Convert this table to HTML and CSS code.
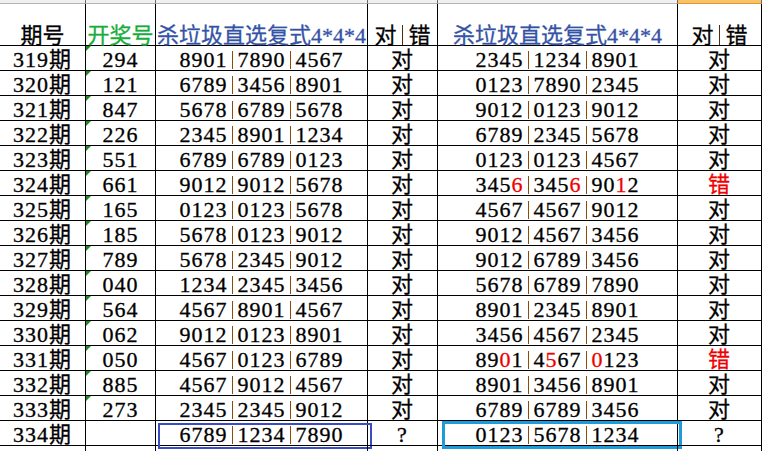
FILE: index.html
```html
<!DOCTYPE html>
<html lang="zh-CN">
<head>
<meta charset="utf-8">
<title>杀垃圾直选复式</title>
<link rel="stylesheet" href="styles.css">
</head>
<body>
<div class="sheet">
  <div class="strip"></div><div class="strip"></div><div class="strip"></div><div class="strip"></div><div class="strip"></div><div class="strip sel"></div>

  <div class="hd">期号</div>
  <div class="hd green">开奖号</div>
  <div class="hd blue">杀垃圾直选复式4*4*4</div>
  <div class="hd">对<i class="bar"></i>错</div>
  <div class="hd blue">杀垃圾直选复式4*4*4</div>
  <div class="hd">对<i class="bar"></i>错</div>

  <div class="c">319期</div><div class="c t">294</div><div class="c">8901<i class="bar"></i>7890<i class="bar"></i>4567</div><div class="c">对</div><div class="c">2345<i class="bar"></i>1234<i class="bar"></i>8901</div><div class="c">对</div>
  <div class="c">320期</div><div class="c t">121</div><div class="c">6789<i class="bar"></i>3456<i class="bar"></i>8901</div><div class="c">对</div><div class="c">0123<i class="bar"></i>7890<i class="bar"></i>2345</div><div class="c">对</div>
  <div class="c">321期</div><div class="c t">847</div><div class="c">5678<i class="bar"></i>6789<i class="bar"></i>5678</div><div class="c">对</div><div class="c">9012<i class="bar"></i>0123<i class="bar"></i>9012</div><div class="c">对</div>
  <div class="c">322期</div><div class="c t">226</div><div class="c">2345<i class="bar"></i>8901<i class="bar"></i>1234</div><div class="c">对</div><div class="c">6789<i class="bar"></i>2345<i class="bar"></i>5678</div><div class="c">对</div>
  <div class="c">323期</div><div class="c t">551</div><div class="c">6789<i class="bar"></i>6789<i class="bar"></i>0123</div><div class="c">对</div><div class="c">0123<i class="bar"></i>0123<i class="bar"></i>4567</div><div class="c">对</div>
  <div class="c">324期</div><div class="c t">661</div><div class="c">9012<i class="bar"></i>9012<i class="bar"></i>5678</div><div class="c">对</div><div class="c">345<span class="r">6</span><i class="bar"></i>345<span class="r">6</span><i class="bar"></i>90<span class="r">1</span>2</div><div class="c r">错</div>
  <div class="c">325期</div><div class="c t">165</div><div class="c">0123<i class="bar"></i>0123<i class="bar"></i>5678</div><div class="c">对</div><div class="c">4567<i class="bar"></i>4567<i class="bar"></i>9012</div><div class="c">对</div>
  <div class="c">326期</div><div class="c t">185</div><div class="c">5678<i class="bar"></i>0123<i class="bar"></i>9012</div><div class="c">对</div><div class="c">9012<i class="bar"></i>4567<i class="bar"></i>3456</div><div class="c">对</div>
  <div class="c">327期</div><div class="c t">789</div><div class="c">5678<i class="bar"></i>2345<i class="bar"></i>9012</div><div class="c">对</div><div class="c">9012<i class="bar"></i>6789<i class="bar"></i>3456</div><div class="c">对</div>
  <div class="c">328期</div><div class="c t">040</div><div class="c">1234<i class="bar"></i>2345<i class="bar"></i>3456</div><div class="c">对</div><div class="c">5678<i class="bar"></i>6789<i class="bar"></i>7890</div><div class="c">对</div>
  <div class="c">329期</div><div class="c t">564</div><div class="c">4567<i class="bar"></i>8901<i class="bar"></i>4567</div><div class="c">对</div><div class="c">8901<i class="bar"></i>2345<i class="bar"></i>8901</div><div class="c">对</div>
  <div class="c">330期</div><div class="c t">062</div><div class="c">9012<i class="bar"></i>0123<i class="bar"></i>8901</div><div class="c">对</div><div class="c">3456<i class="bar"></i>4567<i class="bar"></i>2345</div><div class="c">对</div>
  <div class="c">331期</div><div class="c t">050</div><div class="c">4567<i class="bar"></i>0123<i class="bar"></i>6789</div><div class="c">对</div><div class="c">89<span class="r">0</span>1<i class="bar"></i>4<span class="r">5</span>67<i class="bar"></i><span class="r">0</span>123</div><div class="c r">错</div>
  <div class="c">332期</div><div class="c t">885</div><div class="c">4567<i class="bar"></i>9012<i class="bar"></i>4567</div><div class="c">对</div><div class="c">8901<i class="bar"></i>3456<i class="bar"></i>8901</div><div class="c">对</div>
  <div class="c">333期</div><div class="c t">273</div><div class="c">2345<i class="bar"></i>2345<i class="bar"></i>9012</div><div class="c">对</div><div class="c">6789<i class="bar"></i>6789<i class="bar"></i>3456</div><div class="c">对</div>
  <div class="c">334期</div><div class="c"></div><div class="c box-a">6789<i class="bar"></i>1234<i class="bar"></i>7890</div><div class="c">?</div><div class="c box-b">0123<i class="bar"></i>5678<i class="bar"></i>1234</div><div class="c">?</div>

  <div class="c"></div><div class="c"></div><div class="c"></div><div class="c"></div><div class="c"></div><div class="c"></div>
</div>
</body>
</html>
```

FILE: styles.css
```css
html, body {
  margin: 0;
  padding: 0;
  background: #ffffff;
}

body {
  width: 765px;
  height: 451px;
  overflow: hidden;
  font-family: "Liberation Serif", "Noto Sans CJK SC", serif;
  font-size: 22px;
  color: #000;
}

.sheet {
  display: grid;
  grid-template-columns: 86px 70px 212px 70px 240px 84px;
  grid-template-rows: 4px 42px;
  grid-auto-rows: 25px;
}

.strip {
  box-sizing: border-box;
  background: #f0f0f0;
  border-right: 1px solid #6a6a6a;
  border-bottom: 1px solid #b4b4b4;
}

.strip.sel {
  background: #f7c36a;
  border-bottom-color: #e8962a;
}

.hd,
.c {
  box-sizing: border-box;
  border-right: 1px solid #000;
  border-bottom: 1px solid #000;
  display: flex;
  justify-content: center;
  white-space: nowrap;
  font-family: "Liberation Serif", "Noto Sans CJK SC", serif;
  -webkit-text-stroke: 0.3px currentColor;
}

.hd {
  align-items: flex-end;
  line-height: 19px;
}

.c {
  align-items: flex-start;
  line-height: 24px;
  padding-top: 2px;
  letter-spacing: 1px;
  position: relative;
}

.green { color: #17ad3c; }
.blue { color: #3453a6; }
.r { color: #f00000; }

.bar {
  display: inline-block;
  width: 1px;
  height: 18px;
  background: #8a4c08;
  margin: 3px 5px 0 4px;
}

.hd .bar {
  align-self: flex-end;
  height: 20px;
  margin: 0 6px 0 5px;
  background: #4a300c;
}

.t::before {
  content: "";
  position: absolute;
  left: 0;
  top: 0;
  border-top: 5px solid #1c8c1c;
  border-right: 5px solid transparent;
}

.box-a::after {
  content: "";
  position: absolute;
  left: 2px;
  top: 2px;
  width: 214px;
  height: 26px;
  box-sizing: border-box;
  border: 2px solid #3a4cc2;
}

.box-b::after {
  content: "";
  position: absolute;
  left: 4px;
  top: 0;
  width: 240px;
  height: 28px;
  box-sizing: border-box;
  border: 3px solid #1e9bdb;
}
```
